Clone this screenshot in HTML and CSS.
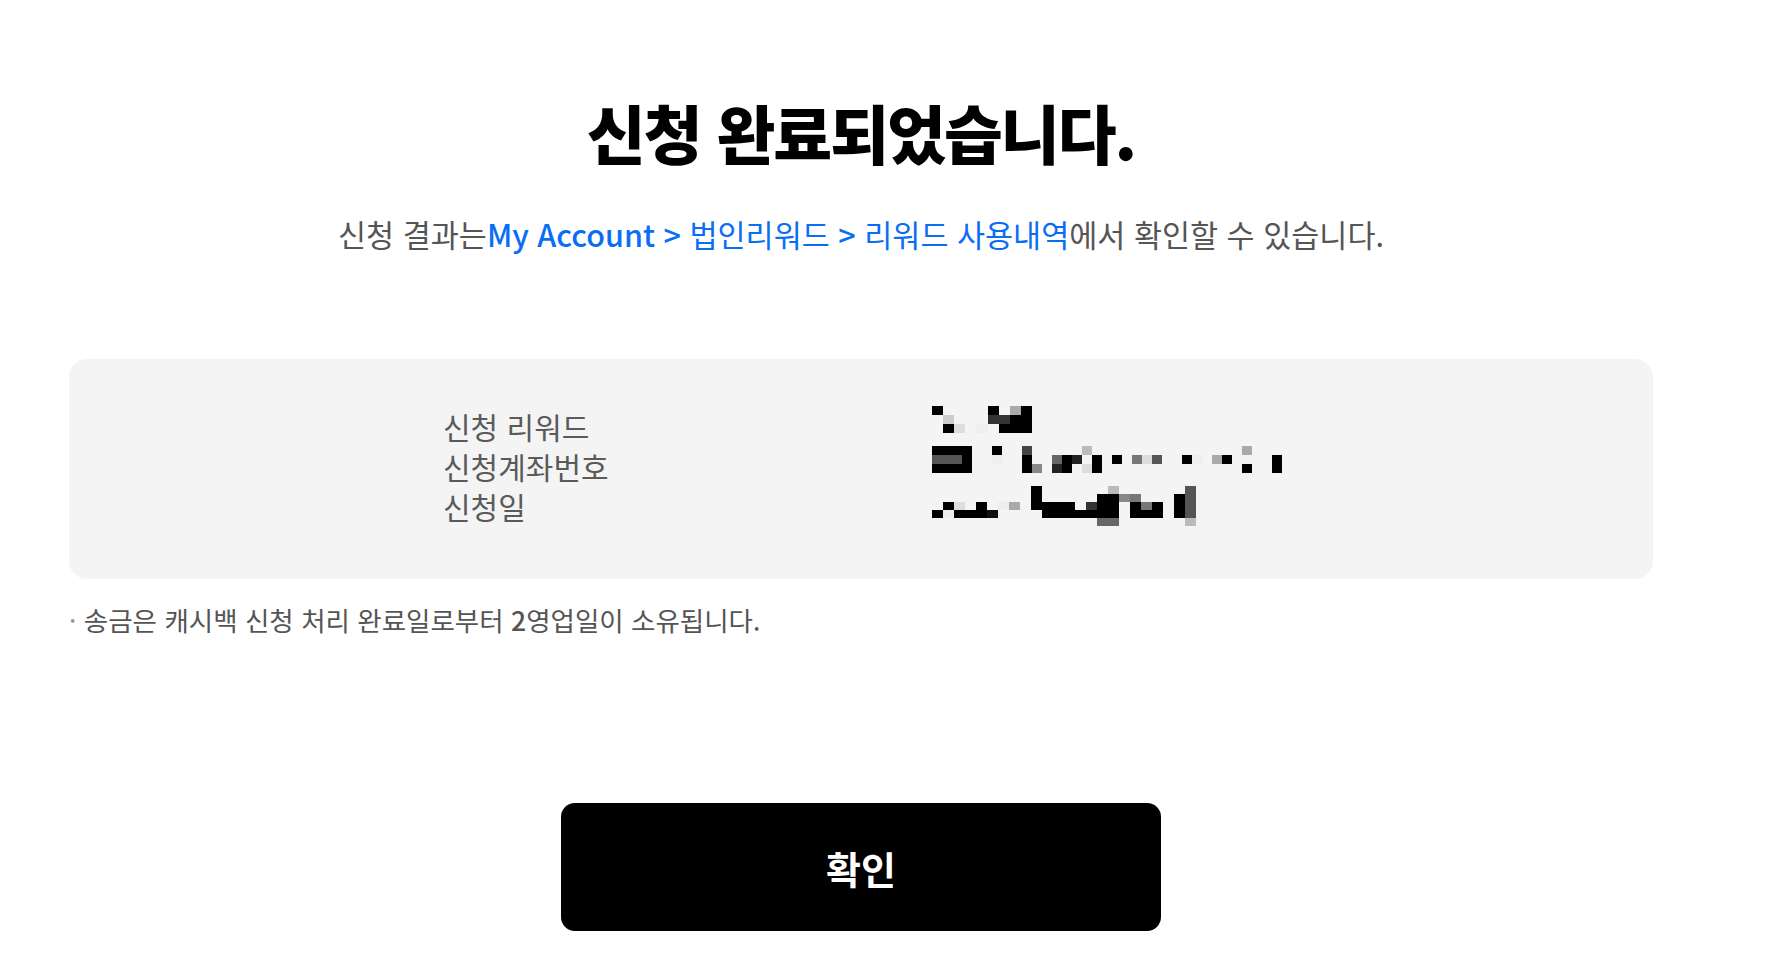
FILE: index.html
```html
<!DOCTYPE html>
<html lang="ko">
<head>
<meta charset="utf-8">
<title>신청 완료</title>
<link rel="stylesheet" href="styles.css">
</head>
<body>
<main class="page">
  <h1 class="title">신청 완료되었습니다.</h1>
  <p class="subtitle">신청 결과는<span class="link"><span class="latin">My Account &gt;</span> 법인리워드 <span class="latin">&gt;</span> 리워드 사용내역</span>에서 확인할 수 있습니다.</p>

  <section class="info">
    <dl class="info-grid">
      <dt>신청 리워드</dt>
      <dd>
        <svg class="mosaic" width="100" height="27" viewBox="0 0 9 3" preserveAspectRatio="none" shape-rendering="crispEdges">
          <rect x="0" y="0" width="1" height="1" fill="#000"/>
          <rect x="5" y="0" width="1" height="1" fill="#000"/>
          <rect x="7" y="0" width="1" height="1" fill="#aaa"/>
          <rect x="8" y="0" width="1" height="1" fill="#000"/>
          <rect x="1" y="1" width="1" height="1" fill="#ccc"/>
          <rect x="5" y="1" width="2" height="1" fill="#333"/>
          <rect x="7" y="1" width="2" height="1" fill="#000"/>
          <rect x="1" y="2" width="1" height="1" fill="#000"/>
          <rect x="2" y="2" width="1" height="1" fill="#ddd"/>
          <rect x="4" y="2" width="1" height="1" fill="#eee"/>
          <rect x="6" y="2" width="3" height="1" fill="#000"/>
        </svg>
      </dd>
      <dt>신청계좌번호</dt>
      <dd>
        <svg class="mosaic" width="350" height="27" viewBox="0 0 35 3" preserveAspectRatio="none" shape-rendering="crispEdges">
          <rect x="0" y="0" width="4" height="1" fill="#000"/>
          <rect x="0" y="1" width="3" height="1" fill="#555"/>
          <rect x="3" y="1" width="1" height="1" fill="#000"/>
          <rect x="0" y="2" width="4" height="1" fill="#000"/>
          <rect x="6" y="0" width="1" height="1" fill="#000"/>
          <rect x="6" y="1" width="1" height="1" fill="#eee"/>
          <rect x="9" y="0" width="1" height="1" fill="#444"/>
          <rect x="9" y="1" width="1" height="2" fill="#000"/>
          <rect x="10" y="2" width="1" height="1" fill="#888"/>
          <rect x="12" y="1" width="1" height="1" fill="#666"/>
          <rect x="12" y="2" width="1" height="1" fill="#222"/>
          <rect x="13" y="1" width="1" height="2" fill="#000"/>
          <rect x="14" y="1" width="1" height="1" fill="#222"/>
          <rect x="15" y="0" width="1" height="1" fill="#bbb"/>
          <rect x="15" y="2" width="1" height="1" fill="#ddd"/>
          <rect x="16" y="1" width="1" height="2" fill="#000"/>
          <rect x="18" y="1" width="1" height="1" fill="#000"/>
          <rect x="20" y="1" width="1" height="1" fill="#777"/>
          <rect x="21" y="1" width="1" height="1" fill="#ddd"/>
          <rect x="22" y="1" width="1" height="1" fill="#555"/>
          <rect x="25" y="1" width="1" height="1" fill="#000"/>
          <rect x="26" y="1" width="1" height="1" fill="#eee"/>
          <rect x="28" y="1" width="1" height="1" fill="#aaa"/>
          <rect x="29" y="1" width="1" height="1" fill="#000"/>
          <rect x="31" y="0" width="1" height="1" fill="#aaa"/>
          <rect x="31" y="2" width="1" height="1" fill="#000"/>
          <rect x="34" y="1" width="1" height="2" fill="#000"/>
        </svg>
      </dd>
      <dt>신청일</dt>
      <dd>
        <svg class="mosaic" width="264" height="40" viewBox="0 0 24 5" preserveAspectRatio="none" shape-rendering="crispEdges">
          <rect x="9" y="0" width="1" height="3" fill="#000"/>
          <rect x="16" y="0" width="1" height="1" fill="#bbb"/>
          <rect x="15" y="1" width="2" height="1" fill="#000"/>
          <rect x="17" y="1" width="1" height="1" fill="#888"/>
          <rect x="23" y="0" width="1" height="4" fill="#555"/>
          <rect x="1" y="2" width="1" height="1" fill="#000"/>
          <rect x="2" y="2" width="1" height="1" fill="#ddd"/>
          <rect x="4" y="2" width="1" height="1" fill="#000"/>
          <rect x="6" y="2" width="1" height="1" fill="#eee"/>
          <rect x="7" y="2" width="1" height="1" fill="#aaa"/>
          <rect x="10" y="2" width="3" height="1" fill="#000"/>
          <rect x="14" y="2" width="1" height="1" fill="#333"/>
          <rect x="15" y="2" width="2" height="1" fill="#000"/>
          <rect x="18" y="1" width="1" height="1" fill="#777"/>
          <rect x="18" y="2" width="1" height="2" fill="#000"/>
          <rect x="19" y="2" width="1" height="1" fill="#777"/>
          <rect x="20" y="2" width="1" height="2" fill="#000"/>
          <rect x="22" y="1" width="1" height="3" fill="#000"/>
          <rect x="0" y="3" width="1" height="1" fill="#000"/>
          <rect x="1" y="3" width="1" height="1" fill="#eee"/>
          <rect x="2" y="3" width="3" height="1" fill="#000"/>
          <rect x="5" y="3" width="1" height="1" fill="#111"/>
          <rect x="10" y="3" width="7" height="1" fill="#000"/>
          <rect x="19" y="3" width="1" height="1" fill="#000"/>
          <rect x="15" y="4" width="2" height="1" fill="#666"/>
          <rect x="23" y="4" width="1" height="1" fill="#bbb"/>
        </svg>
      </dd>
    </dl>
  </section>

  <p class="note"><span class="dot">·</span> 송금은 캐시백 신청 처리 완료일로부터 <span class="latin">2</span>영업일이 소유됩니다.</p>

  <div class="actions">
    <button class="btn" type="button">확인</button>
  </div>
</main>
</body>
</html>
```

FILE: styles.css
```css
* { box-sizing: border-box; }

body {
  margin: 0;
  background: #fff;
  font-family: "Noto Sans CJK KR", "Noto Sans", sans-serif;
  color: #000;
}

.page {
  width: 1584px;
  margin-left: 69px;
  padding-top: 95px;
}

.title {
  margin: 0;
  font-size: 64px;
  line-height: 72px;
  font-weight: 900;
  letter-spacing: -2px;
  text-align: center;
}

.subtitle {
  margin: 47px 0 0;
  font-size: 30.5px;
  line-height: 40px;
  color: #555;
  text-align: center;
}

.link { color: #0a6ef5; }

.latin { font-weight: 500; }

.info {
  margin-top: 105px;
  height: 220px;
  background: #f4f4f4;
  border-radius: 18px;
  padding: 47px 0 0 374px;
}

.info-grid {
  margin: 0;
  display: grid;
  grid-template-columns: 489px auto;
  grid-auto-rows: 40px;
}

.info-grid dt {
  font-size: 30px;
  line-height: 40px;
  color: #5a5a5a;
}

.info-grid dd {
  margin: 0;
  display: flex;
  align-items: flex-start;
}

.mosaic { display: block; }

.note {
  margin: 24px 0 0;
  font-size: 26.5px;
  line-height: 34px;
  color: #555;
}

.dot { color: #999; }

.actions {
  display: flex;
  justify-content: center;
  margin-top: 166px;
}

.btn {
  width: 600px;
  height: 128px;
  border: 0;
  border-radius: 14px;
  background: #000;
  color: #fff;
  font-family: inherit;
  font-size: 38px;
  font-weight: 700;
  cursor: pointer;
}
```
